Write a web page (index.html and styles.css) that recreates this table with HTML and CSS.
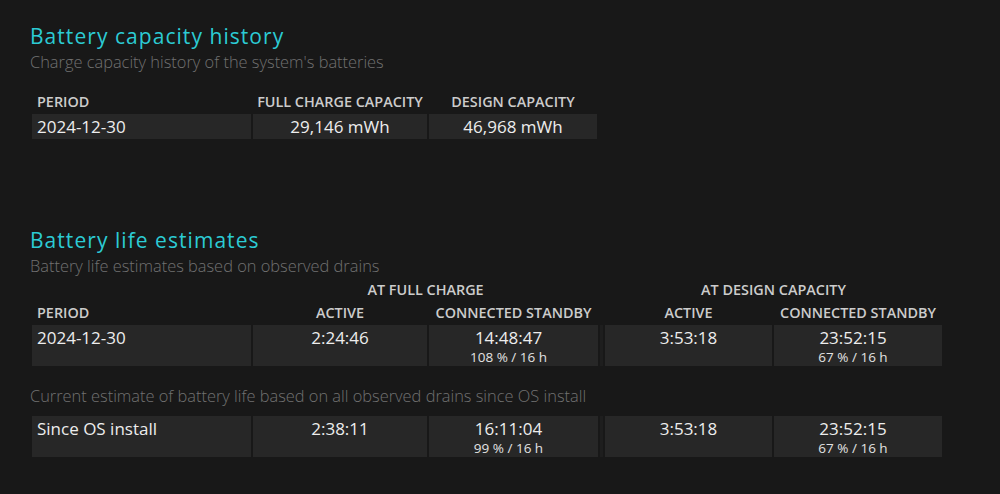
FILE: index.html
```html
<!DOCTYPE html>
<html lang="en">
<head>
<meta charset="utf-8">
<title>Battery report</title>
<link rel="stylesheet" href="styles.css">
</head>
<body>
<main class="report">
  <section class="section">
    <h2 class="title">Battery capacity history</h2>
    <p class="sub">Charge capacity history of the system's batteries</p>
    <table class="grid grid-cap">
      <colgroup>
        <col class="c-period"><col class="c-a"><col class="c-b2">
      </colgroup>
      <thead>
        <tr><th class="left">PERIOD</th><th>FULL CHARGE CAPACITY</th><th>DESIGN CAPACITY</th></tr>
      </thead>
      <tbody>
        <tr class="row"><td class="left">2024-12-30</td><td>29,146 mWh</td><td>46,968 mWh</td></tr>
      </tbody>
    </table>
  </section>

  <section class="section section-life">
    <h2 class="title">Battery life estimates</h2>
    <p class="sub">Battery life estimates based on observed drains</p>
    <table class="grid grid-life">
      <colgroup>
        <col class="c-period"><col class="c-a"><col class="c-b"><col class="c-sep"><col class="c-c"><col class="c-d">
      </colgroup>
      <thead>
        <tr><th></th><th colspan="2">AT FULL CHARGE</th><th class="sep-h"></th><th colspan="2">AT DESIGN CAPACITY</th></tr>
        <tr><th class="left">PERIOD</th><th>ACTIVE</th><th>CONNECTED STANDBY</th><th class="sep-h"></th><th>ACTIVE</th><th>CONNECTED STANDBY</th></tr>
      </thead>
      <tbody>
        <tr class="row tall">
          <td class="left">2024-12-30</td>
          <td>2:24:46</td>
          <td class="standby">14:48:47<span class="ratio">108 % / 16 h</span></td>
          <td class="sep"></td>
          <td>3:53:18</td>
          <td class="standby">23:52:15<span class="ratio">67 % / 16 h</span></td>
        </tr>
      </tbody>
    </table>

    <p class="sub sub-current">Current estimate of battery life based on all observed drains since OS install</p>
    <table class="grid grid-life grid-current">
      <colgroup>
        <col class="c-period"><col class="c-a"><col class="c-b"><col class="c-sep"><col class="c-c"><col class="c-d">
      </colgroup>
      <tbody>
        <tr class="row tall">
          <td class="left">Since OS install</td>
          <td>2:38:11</td>
          <td class="standby">16:11:04<span class="ratio">99 % / 16 h</span></td>
          <td class="sep"></td>
          <td>3:53:18</td>
          <td class="standby">23:52:15<span class="ratio">67 % / 16 h</span></td>
        </tr>
      </tbody>
    </table>
  </section>
</main>
</body>
</html>
```

FILE: styles.css
```css
html, body {
  margin: 0;
  padding: 0;
  background: #181818;
}

body {
  font-family: "Open Sans", "Noto Sans", "Liberation Sans", sans-serif;
  color: #ededed;
}

.report {
  padding: 24px 0 0 30px;
}

.title {
  margin: 0;
  font-size: 21px;
  line-height: 24px;
  font-weight: 400;
  letter-spacing: 0.05em;
  color: #2ccbd4;
}

.sub {
  margin: 4px 0 0;
  font-size: 16.4px;
  line-height: 20px;
  font-weight: 300;
  color: #717171;
}

.grid {
  border-collapse: separate;
  border-spacing: 2px;
  table-layout: fixed;
  margin: 17px 0 0 0;
}

.grid-cap { width: 569px; }
.grid-life { width: 914px; margin-top: 1px; }
.grid-current { margin-top: 8px; }

.c-period { width: 219px; }
.c-a { width: 174px; }
.c-b { width: 169px; }
.c-b2 { width: 168px; }
.c-sep { width: 3px; }
.c-c { width: 167px; }
.c-d { width: 168px; }

th {
  padding: 0;
  font-size: 14.4px;
  line-height: 21px;
  font-weight: 600;
  color: #cccccc;
  text-align: center;
  white-space: nowrap;
}

th.left, td.left {
  text-align: left;
  padding-left: 5px;
}

td {
  padding: 0;
  height: 25px;
  font-size: 17px;
  line-height: 25px;
  background: #272727;
  text-align: center;
  vertical-align: top;
  white-space: nowrap;
}

td.standby {
  padding-right: 10px;
}

.row.tall td {
  height: 41px;
}

td.sep {
  background: #1e1e1e;
}

.ratio {
  display: block;
  font-size: 13.5px;
  line-height: 14px;
  color: #e2e2e2;
}

.section-life {
  margin-top: 87px;
}

.sub-current {
  margin-top: 18px;
}
```
